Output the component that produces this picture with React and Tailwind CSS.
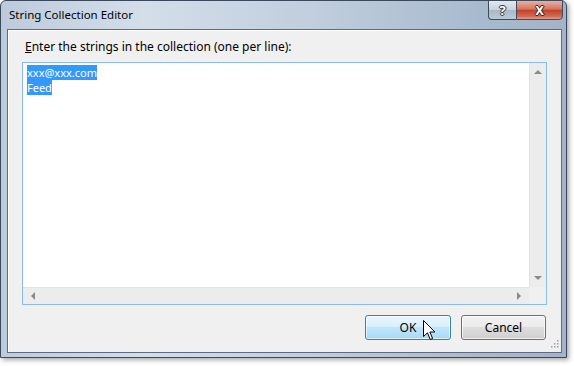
import React from "react";

const font = { fontFamily: '"Segoe UI", "Noto Sans", "Open Sans", sans-serif' };

function Tri({ dir }) {
  const pts = {
    up: "0,5 4,1 8,5",
    down: "0,1 4,5 8,1",
    left: "5,0 1,4 5,8",
    right: "1,0 5,4 1,8",
  }[dir];
  const vb = dir === "up" || dir === "down" ? "0 0 8 6" : "0 0 6 8";
  const cls = dir === "up" || dir === "down" ? "w-[8px] h-[6px]" : "w-[6px] h-[8px]";
  return (
    <svg viewBox={vb} className={cls}>
      <polygon points={pts} fill="#8a8a8a" />
    </svg>
  );
}

function Cursor() {
  return (
    <svg width="13" height="21" viewBox="0 0 13 21" className="absolute left-[423px] top-[320px]">
      <path
        d="M0.5 0.5 L0.5 16.5 L4.5 12.8 L7.2 19.5 L9.6 18.5 L6.9 12 L12 12 Z"
        fill="#fff"
        stroke="#000"
        strokeWidth="1"
        strokeLinejoin="miter"
      />
    </svg>
  );
}

export default function App() {
  return (
    <div className="w-[574px] h-[366px] bg-white relative overflow-hidden" style={font}>
      <div className="w-[567px] h-[358px] rounded-t-[6px] border border-[#3a495c] shadow-[2px_2px_5px_rgba(0,0,0,0.35)] flex flex-col bg-[linear-gradient(to_right,#bccbdc,#d3dee9_25%,#c0cedd_55%,#a8bace_85%,#a2b4c9)]">
        <div className="h-[28px] flex items-start shrink-0">
          <div className="pl-[8px] pt-[6px] text-[11.5px] leading-[16px] text-black">String Collection Editor</div>
          <div className="ml-auto mr-[3px] flex h-[20px] -mt-px">
            <div className="w-[28px] h-[20px] border border-[#3d4b5d] border-r-0 rounded-bl-[4px] bg-[linear-gradient(to_bottom,#e2e8ef,#c9d3de_48%,#aab8c8_52%,#bdc9d6)] flex items-center justify-center text-white font-bold text-[13px] leading-none [text-shadow:0_0_1px_#2d3a4a,1px_0_0_#2d3a4a,-1px_0_0_#2d3a4a,0_1px_0_#2d3a4a,0_-1px_0_#2d3a4a]">
              ?
            </div>
            <div className="w-[47px] h-[20px] border border-[#3d4b5d] rounded-br-[4px] bg-[linear-gradient(to_bottom,#e8b0a2,#d47560_45%,#c4422a_52%,#d06a53_85%,#e0a090)] flex items-center justify-center text-white font-bold text-[13px] leading-none [text-shadow:0_0_1px_#3a2020,1px_0_0_#3a2020,-1px_0_0_#3a2020,0_1px_0_#3a2020,0_-1px_0_#3a2020]">
              X
            </div>
          </div>
        </div>
        <div className="flex-1 ml-[6px] mr-[4px] mb-[4px] border border-[#5c6b7e] bg-[#f0f0f0] shadow-[inset_1px_1px_0_#ffffff] flex flex-col relative">
          <div className="pl-[17px] pt-[9px] text-[12px] leading-[16px] text-black">
            <span className="underline">E</span>nter the strings in the collection (one per line):
          </div>
          <div className="mt-[7px] ml-[14px] mr-[14px] h-[243px] border border-[#8cbbe9] bg-white flex flex-col">
            <div className="flex-1 flex">
              <div className="flex-1 pl-[4px] pt-[2px] text-[11px] flex flex-col items-start">
                <div className="h-[15px] leading-[15px] bg-[#3399ff] text-white overflow-hidden">xxx@xxx.com</div>
                <div className="h-[15px] leading-[15px] bg-[#3399ff] text-white overflow-hidden">Feed</div>
              </div>
              <div className="w-[17px] bg-[#ececec] border-l border-[#e2e2e2] flex flex-col items-center justify-between py-[6px]">
                <Tri dir="up" />
                <Tri dir="down" />
              </div>
            </div>
            <div className="h-[17px] flex">
              <div className="flex-1 bg-[#ececec] border-t border-[#e2e2e2] flex items-center justify-between px-[7px]">
                <Tri dir="left" />
                <Tri dir="right" />
              </div>
              <div className="w-[17px] bg-[#f0f0f0]" />
            </div>
          </div>
          <div className="mt-[10px] mr-[15px] flex justify-end gap-[10px]">
            <div className="w-[86px] h-[25px] rounded-[3px] border border-[#3c7fb1] bg-[linear-gradient(to_bottom,#eaf6fd,#d9f0fc_45%,#bee6fd_50%,#a7d9f5)] shadow-[inset_0_0_0_1px_rgba(255,255,255,0.6)] flex items-center justify-center text-[12px] text-black">
              OK
            </div>
            <div className="w-[85px] h-[25px] rounded-[3px] border border-[#707070] bg-[linear-gradient(to_bottom,#f2f2f2,#ebebeb_45%,#dddddd_50%,#cfcfcf)] shadow-[inset_0_0_0_1px_rgba(255,255,255,0.7)] flex items-center justify-center text-[12px] text-black">
              Cancel
            </div>
          </div>
          <svg width="10" height="10" viewBox="0 0 10 10" className="absolute right-[2px] bottom-[2px]">
            {[[8, 0], [8, 3], [5, 3], [8, 6], [5, 6], [2, 6]].map(([x, y], i) => (
              <rect key={i} x={x} y={y} width="1.5" height="1.5" fill="#a0a0a0" />
            ))}
          </svg>
        </div>
      </div>
      <Cursor />
    </div>
  );
}
